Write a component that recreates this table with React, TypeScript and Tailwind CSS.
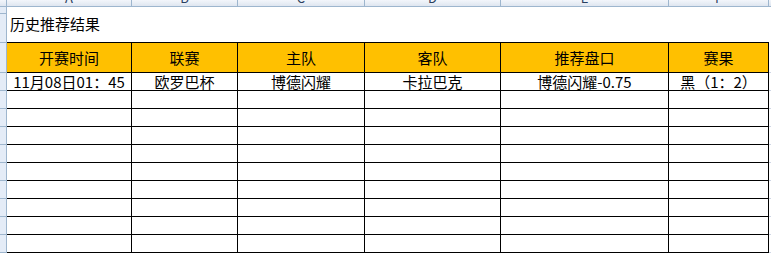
import React from 'react';

// Column layout of the sheet: letter, width (px incl. right border)
const columns = [
  { key: 'A', width: 125, title: '开赛时间' },
  { key: 'B', width: 106, title: '联赛' },
  { key: 'C', width: 127, title: '主队' },
  { key: 'D', width: 136, title: '客队' },
  { key: 'E', width: 168, title: '推荐盘口' },
  { key: 'F', width: 100, title: '赛果' },
];

const historyRows: string[][] = [
  ['11月08日01：45', '欧罗巴杯', '博德闪耀', '卡拉巴克', '博德闪耀-0.75', '黑（1：2）'],
  ...Array.from({ length: 9 }, () => ['', '', '', '', '', '']),
];

const font = { fontFamily: '"Noto Sans CJK SC", "Liberation Sans", sans-serif' };

const RowStub = ({ className = '' }: { className?: string }) => (
  <div className={`w-[7px] shrink-0 bg-[#e4ecf7] border-r border-b border-[#9eb6ce] ${className}`} />
);

export default function App() {
  return (
    <div className="w-[771px] h-[257px] overflow-hidden bg-white text-black" style={font}>
      {/* column letters bar, only the lower edge is on screen */}
      <div className="flex h-[7px] bg-gradient-to-b from-[#f3f6fb] to-[#dfe6f0] border-b border-[#9eb6ce]">
        <div className="w-[7px] shrink-0 border-r border-[#9eb6ce]" />
        {columns.map((c) => (
          <div
            key={c.key}
            style={{ width: c.width }}
            className="shrink-0 border-r border-[#9eb6ce] overflow-hidden flex justify-center"
          >
            <span className="text-[13px] leading-[14px] -mt-[9px] text-[#2a4060]">{c.key}</span>
          </div>
        ))}
        <div className="flex-1" />
      </div>

      {/* title rows */}
      <div className="flex h-[7px]">
        <RowStub />
        <div className="flex-1" />
      </div>
      <div className="flex h-[29px]">
        <RowStub />
        <div className="w-[762px] border-b border-black text-[15px] leading-[15px] pl-[3px] pt-[2px]">
          历史推荐结果
        </div>
        <div className="flex-1" />
      </div>

      {/* header row */}
      <div className="flex h-[30px]">
        <RowStub />
        {columns.map((c) => (
          <div
            key={c.key}
            style={{ width: c.width }}
            className="shrink-0 bg-[#ffc000] border-r border-b border-black flex items-center justify-center text-[15px] leading-[15px]"
          >
            {c.title}
          </div>
        ))}
        <div className="flex-1 border-b border-[#d0d7e5]" />
      </div>

      {/* data rows */}
      {historyRows.map((row, i) => (
        <div key={i} className="flex h-[18px]">
          <RowStub />
          {row.map((cell, j) => (
            <div
              key={j}
              style={{ width: columns[j].width }}
              className="shrink-0 border-r border-b border-black flex items-end justify-center text-[15px] leading-[16px] whitespace-nowrap"
            >
              {cell}
            </div>
          ))}
          <div className="flex-1 border-b border-[#d0d7e5]" />
        </div>
      ))}
    </div>
  );
}
